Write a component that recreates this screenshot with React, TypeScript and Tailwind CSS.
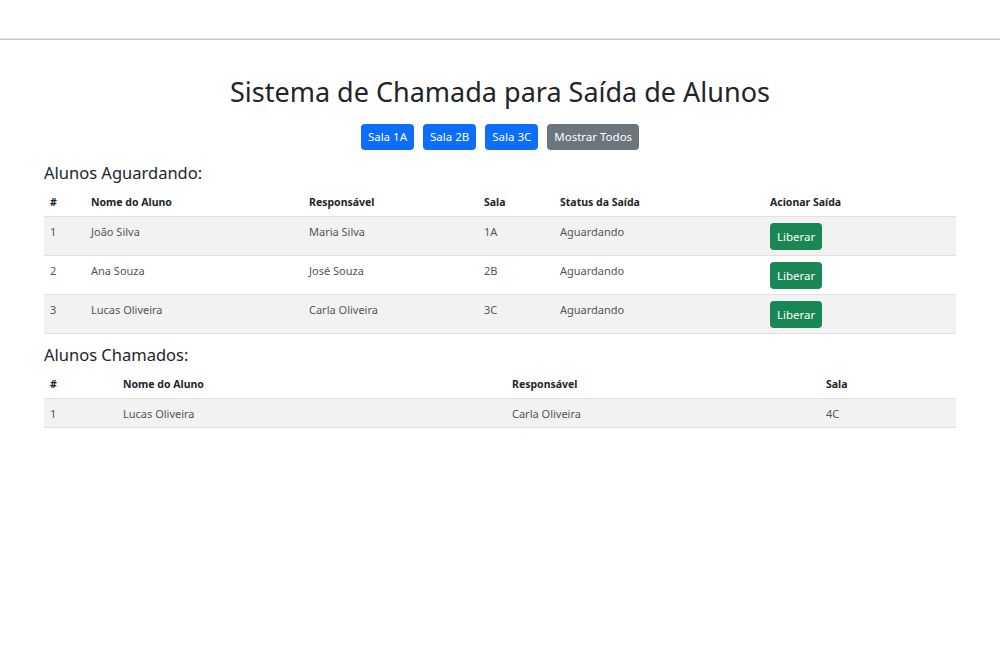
const aguardando = [
  { id: 1, nome: 'João Silva', responsavel: 'Maria Silva', sala: '1A', status: 'Aguardando' },
  { id: 2, nome: 'Ana Souza', responsavel: 'José Souza', sala: '2B', status: 'Aguardando' },
  { id: 3, nome: 'Lucas Oliveira', responsavel: 'Carla Oliveira', sala: '3C', status: 'Aguardando' },
]

const chamados = [
  { id: 1, nome: 'Lucas Oliveira', responsavel: 'Carla Oliveira', sala: '4C' },
]

const th = 'px-[6px] py-[6px] text-left align-top text-[10.5px] leading-[16px] font-bold text-[#212529] border-b border-[#dee2e6]'
const td = 'px-[6px] pt-[6px] pb-[5px] align-top text-[11px] leading-[17px] text-[#555] border-b border-[#dee2e6]'

function SalaButton({ label, gray }: { label: string; gray?: boolean }) {
  return (
    <button
      className={
        'h-[26px] rounded-[4px] px-[7px] text-[11.5px] text-white ' +
        (gray ? 'bg-[#6c757d]' : 'bg-[#0d6efd]')
      }
    >
      {label}
    </button>
  )
}

export default function App() {
  return (
    <div className="min-h-[667px] bg-white font-['Noto_Sans',sans-serif] text-[#212529]">
      <header className="h-[40px] border-b border-[#c4c4c4] shadow-[0_-1px_0_#e6e6e6_inset]" />

      <main className="px-[44px]">
        <h1 className="mt-[34px] text-center text-[27px] leading-[36px] font-normal">
          Sistema de Chamada para Saída de Alunos
        </h1>

        <div className="mt-[14px] flex justify-center gap-[9px]">
          <SalaButton label="Sala 1A" />
          <SalaButton label="Sala 2B" />
          <SalaButton label="Sala 3C" />
          <SalaButton gray label="Mostrar Todos" />
        </div>

        {/* Alunos aguardando */}
        <h4 className="mt-[12px] text-[16.5px] leading-[22px]">Alunos Aguardando:</h4>
        <table className="mt-[4px] w-full border-collapse">
          <colgroup>
            <col className="w-[41px]" />
            <col className="w-[218px]" />
            <col className="w-[175px]" />
            <col className="w-[76px]" />
            <col className="w-[210px]" />
            <col />
          </colgroup>
          <thead>
            <tr>
              <th className={th}>#</th>
              <th className={th}>Nome do Aluno</th>
              <th className={th}>Responsável</th>
              <th className={th}>Sala</th>
              <th className={th}>Status da Saída</th>
              <th className={th}>Acionar Saída</th>
            </tr>
          </thead>
          <tbody>
            {aguardando.map((a, i) => (
              <tr key={a.id} className={i % 2 === 0 ? 'bg-[#f2f2f2]' : 'bg-white'}>
                <td className={td}>{a.id}</td>
                <td className={td}>{a.nome}</td>
                <td className={td}>{a.responsavel}</td>
                <td className={td}>{a.sala}</td>
                <td className={td}>{a.status}</td>
                <td className={td}>
                  <button className="block h-[27px] rounded-[4px] bg-[#198754] px-[7px] text-[11.5px] leading-[27px] text-white">
                    Liberar
                  </button>
                </td>
              </tr>
            ))}
          </tbody>
        </table>

        {/* Alunos chamados */}
        <h4 className="mt-[10px] text-[16.5px] leading-[22px]">Alunos Chamados:</h4>
        <table className="mt-[4px] w-full border-collapse">
          <colgroup>
            <col className="w-[73px]" />
            <col className="w-[389px]" />
            <col className="w-[314px]" />
            <col />
          </colgroup>
          <thead>
            <tr>
              <th className={th}>#</th>
              <th className={th}>Nome do Aluno</th>
              <th className={th}>Responsável</th>
              <th className={th}>Sala</th>
            </tr>
          </thead>
          <tbody>
            {chamados.map((c) => (
              <tr key={c.id} className="bg-[#f2f2f2]">
                <td className={td}>{c.id}</td>
                <td className={td}>{c.nome}</td>
                <td className={td}>{c.responsavel}</td>
                <td className={td}>{c.sala}</td>
              </tr>
            ))}
          </tbody>
        </table>
      </main>
    </div>
  )
}
